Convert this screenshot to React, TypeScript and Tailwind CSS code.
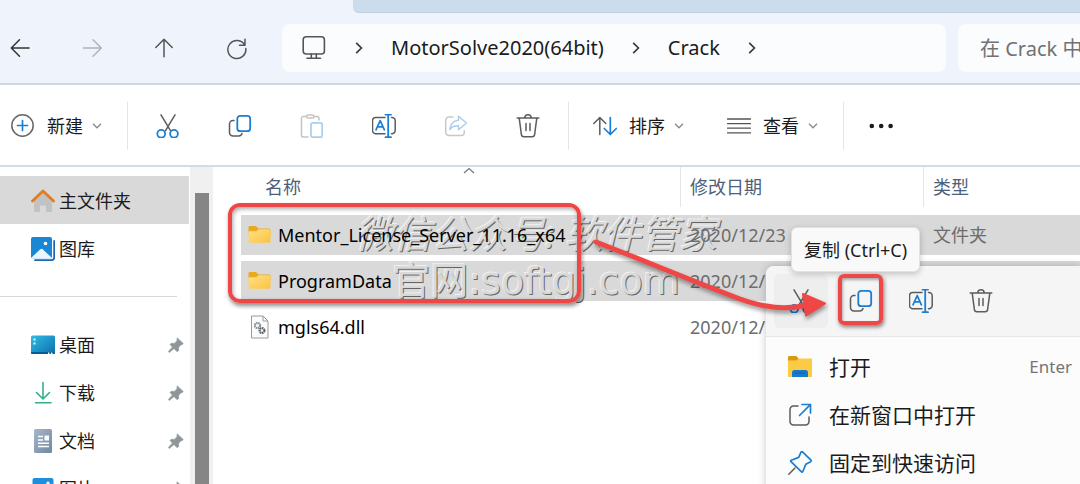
import type { ReactNode } from "react";
import clsx from "clsx";

const BLUE = "#1a7fd4";
const GRAY = "#5c5c5c";

function Icon({
  children,
  size = 24,
  className,
}: {
  children: ReactNode;
  size?: number;
  className?: string;
}) {
  return (
    <svg
      width={size}
      height={size}
      viewBox="0 0 24 24"
      fill="none"
      strokeWidth="1.5"
      strokeLinecap="round"
      strokeLinejoin="round"
      className={clsx("shrink-0", className)}
      aria-hidden="true"
    >
      {children}
    </svg>
  );
}

function ChevronRight() {
  return (
    <svg width="8" height="14" viewBox="0 0 8 14" fill="none" className="shrink-0" aria-hidden="true">
      <path d="M1.2 1.8 6.4 7l-5.2 5.2" stroke="#3a3a3a" strokeWidth="1.7" />
    </svg>
  );
}

function ChevronDown() {
  return (
    <svg width="10" height="6" viewBox="0 0 10 6" fill="none" className="shrink-0" aria-hidden="true">
      <path d="M1 .8l4 4 4-4" stroke="#8a8a8a" strokeWidth="1.3" />
    </svg>
  );
}

function CutIcon() {
  return (
    <Icon>
      <path d="M5 .8l9.600 16M19 .8 9.400 16.800" stroke={GRAY} />
      <circle cx="5.200" cy="19.800" r="3.900" stroke={BLUE} strokeWidth="1.8" />
      <circle cx="18" cy="19.800" r="3.900" stroke={BLUE} strokeWidth="1.8" />
    </Icon>
  );
}

function CopyIcon() {
  return (
    <Icon>
      <path d="M6 6.500H5a3.500 3.500 0 0 0-3.500 3.500v8.500A3.500 3.500 0 0 0 5 22h5.500a3.500 3.500 0 0 0 3.500-2.500" stroke={GRAY} />
      <rect x="9.300" y="1.800" width="12.900" height="15.400" rx="3" stroke={BLUE} strokeWidth="1.8" />
    </Icon>
  );
}

function PasteIcon() {
  return (
    <Icon>
      <path d="M6.500 2.500H3.300a1.800 1.800 0 0 0-1.800 1.800v17a1.800 1.800 0 0 0 1.800 1.800H8M14 2.500h3.200A1.800 1.800 0 0 1 19 4.300V6" stroke="#c4c4c4" />
      <rect x="6.500" y=".9" width="7.500" height="3.200" rx="1.600" stroke="#c4c4c4" />
      <rect x="11" y="8.800" width="11.200" height="14.400" rx="1.800" stroke="#a9cdec" strokeWidth="1.700" />
    </Icon>
  );
}

function RenameIcon() {
  return (
    <Icon>
      <path d="M13 3.500H3.800A3.300 3.300 0 0 0 .5 6.800v9.600a3.300 3.300 0 0 0 3.300 3.300H13M19.500 3.500a3.300 3.300 0 0 1 3.700 3.300v9.600a3.300 3.300 0 0 1-3.700 3.300" stroke={GRAY} />
      <path d="M4 15.800 8.200 6.600l4.200 9.200M5.400 12.800H11" stroke={BLUE} strokeWidth="1.700" />
      <path d="M13.500.5h5.500M13.500 23.200h5.500M16.200.5v22.700" stroke={BLUE} strokeWidth="1.800" />
    </Icon>
  );
}

function ShareIcon() {
  return (
    <Icon>
      <path d="M9 3H5a3.300 3.300 0 0 0-3.300 3.300v11.900A3.300 3.300 0 0 0 5 21.500h12a3.300 3.300 0 0 0 3.300-3.300v-1.500" stroke="#c8c8c8" />
      <path d="M14.500 2.200 22.400 9l-7.900 6.800v-4c-4-.2-6.700 1-8.700 3.700.6-5.400 3.500-8.700 8.700-9.300z" stroke="#abcdeb" />
    </Icon>
  );
}

function TrashIcon() {
  return (
    <Icon>
      <path d="M1.200 4h21.600M8.800 4a3.200 3.200 0 0 1 6.400 0M3.200 4.200l2.200 16.500a2.400 2.400 0 0 0 2.400 2.100h8.400a2.400 2.400 0 0 0 2.400-2.100l2.200-16.500M10 9.600v7M14 9.600v7" stroke={GRAY} />
    </Icon>
  );
}

function FolderIcon() {
  return (
    <svg width="23" height="20" viewBox="0 0 23 20" className="shrink-0" aria-hidden="true">
      <defs>
        <linearGradient id="folder" x1="0" y1="0" x2="1" y2="1">
          <stop offset="0" stopColor="#ffe08a" />
          <stop offset="1" stopColor="#fbc33c" />
        </linearGradient>
      </defs>
      <path d="M.5 2.500C.5 1.400 1.200 1 2 1h6l2.500 2.500H21c1 0 1.500.6 1.500 1.500v5H.5z" fill="#eba91f" />
      <path d="M.5 7.500c0-.8.500-1.200 1.200-1.200h6.500l2.300-2h10.700c.8 0 1.300.5 1.300 1.200v11c0 .9-.5 1.300-1.300 1.300H1.800c-.8 0-1.300-.4-1.300-1.300z" fill="url(#folder)" />
    </svg>
  );
}

function DllIcon() {
  return (
    <svg width="23" height="24" viewBox="0 0 23 24" fill="none" className="shrink-0" aria-hidden="true">
      <path d="M3.500 1h11.500l5 5v17h-16.500z" fill="#fbfbfb" stroke="#9a9a9a" />
      <path d="M15 1v5h5" stroke="#9a9a9a" />
      <circle cx="9.500" cy="10.500" r="2.600" stroke="#8b939b" strokeWidth="2.200" strokeDasharray="1.600 .5" />
      <circle cx="14" cy="15.500" r="2.400" stroke="#59616a" strokeWidth="2.200" strokeDasharray="1.500 .5" />
    </svg>
  );
}

function HomeIcon() {
  return (
    <Icon>
      <path d="M3 11 12 3l9 8v10.500a1.500 1.500 0 0 1-1.500 1.500H15v-6.500h-6V23H4.500A1.500 1.500 0 0 1 3 21.500z" fill="#c2c2c2" />
      <path d="M1.500 12 12 2l10.500 10" stroke="#e07d24" strokeWidth="2.800" />
    </Icon>
  );
}

function GalleryIcon() {
  return (
    <Icon>
      <path d="M4 23.200h16.500a2.700 2.700 0 0 0 2.700-2.700V4" stroke="#1c65b0" strokeWidth="1.800" />
      <rect x="0" y="0" width="21" height="21.500" rx="2" fill="#1b86d3" />
      <path d="M.5 20.500 9 12.500q1.500-1.400 3 0l8.500 8-1 1.200H1.500z" fill="#eaf5fd" />
      <circle cx="14.500" cy="6.500" r="1.800" fill="#fff" />
    </Icon>
  );
}

function DesktopIcon() {
  return (
    <Icon>
      <defs>
        <linearGradient id="desktop" x1="0" y1="0" x2="1" y2="1">
          <stop offset="0" stopColor="#30bce4" />
          <stop offset="1" stopColor="#0b6fae" />
        </linearGradient>
      </defs>
      <rect x="0" y="2.500" width="24" height="18.500" rx="1.500" fill="url(#desktop)" />
      <path d="M0 19h24v.8a1.200 1.200 0 0 1-1.200 1.200H1.200A1.200 1.200 0 0 1 0 19.800z" fill="#075d93" />
      <path d="M2.500 5.500h2v2h-2zM2.500 9.500h2v2h-2zM17 19.500h1.500V21H17zM20 19.500h1.500V21H20z" fill="#e5f8ff" />
    </Icon>
  );
}

function DownloadIcon() {
  return (
    <Icon>
      <path d="M12 1.500v16M5.500 11.500l6.500 6.500 6.500-6.500M4.500 21.800h15.500" stroke="#35b08c" strokeWidth="1.600" />
    </Icon>
  );
}

function DocumentIcon() {
  return (
    <Icon>
      <defs>
        <linearGradient id="doc" x1="0" y1="0" x2="1" y2="1">
          <stop offset="0" stopColor="#a5b7cb" />
          <stop offset="1" stopColor="#73879f" />
        </linearGradient>
      </defs>
      <rect x="3" y="0" width="18" height="24" rx="1.500" fill="url(#doc)" />
      <path d="M7 7.500h5M7 11h5M7 14.300h11M7 17.600h11" stroke="#fff" strokeLinecap="butt" />
      <rect x="13.500" y="6.500" width="4.500" height="5" fill="#fff" />
    </Icon>
  );
}

function PicturesIcon() {
  return (
    <Icon>
      <rect x="1.500" y="1" width="21" height="21" rx="2" fill="#1d8fdc" />
      <path d="M2 20.500 10 12q2-1.600 4 0l8 8.500z" fill="#eaf5fd" />
      <circle cx="17" cy="6" r="1.600" fill="#fff" />
    </Icon>
  );
}

function PinIcon() {
  return (
    <svg width="16" height="16" viewBox="0 0 16 16" className="shrink-0" aria-hidden="true">
      <path d="M9 .8 15.300 6.500l-1.400 1.300-1.400.2-2 2.800.3 2.600-1.600 1.400-3.300-3.200L1.500 15.500.4 14.600l4-4.500L2 7.500l1.300-1.300 3 .2L9 3.800z" fill="#8f9698" stroke="#8f9698" strokeWidth=".6" strokeLinejoin="round" />
    </svg>
  );
}

const quickAccess = [
  { name: "桌面", icon: <DesktopIcon /> },
  { name: "下载", icon: <DownloadIcon /> },
  { name: "文档", icon: <DocumentIcon /> },
  { name: "图片", icon: <PicturesIcon /> },
];

const files = [
  { name: "Mentor_License_Server_11.16_x64", date: "2020/12/23", type: "文件夹", icon: <FolderIcon />, selected: true },
  { name: "ProgramData", date: "2020/12/23", type: "文件夹", icon: <FolderIcon />, selected: true },
  { name: "mgls64.dll", date: "2020/12/23", type: "", icon: <DllIcon />, selected: false },
];

const toolbar = [
  { label: "剪切", icon: <CutIcon /> },
  { label: "复制", icon: <CopyIcon /> },
  { label: "粘贴", icon: <PasteIcon />, disabled: true },
  { label: "重命名", icon: <RenameIcon /> },
  { label: "共享", icon: <ShareIcon />, disabled: true },
  { label: "删除", icon: <TrashIcon /> },
];

export default function App() {
  return (
    <div className="flex h-screen flex-col overflow-hidden bg-white font-['Noto_Sans','Noto_Sans_CJK_SC',sans-serif] text-[18px] leading-6 text-[#1b1b1b]">
      <div className="flex h-[13px] shrink-0 justify-end bg-[#eff4fc]">
        <div className="ml-[353px] flex-1 rounded-bl-md border-b border-[#c0d0dd] bg-[#cbdcec]" />
      </div>
      <NavBar />
      <Toolbar />
      <div className="relative flex min-h-0 flex-1 overflow-hidden">
        <Sidebar />
        <FileList />
        <Watermark />
        <ContextMenu />
        <Annotations />
      </div>
    </div>
  );
}

function NavBar() {
  return (
    <header className="flex shrink-0 items-center border-b-2 border-[#cbd8e1] bg-[#eff4fc] pt-[11px] pb-[11px]">
      <nav className="mr-[34px] flex shrink-0 items-center gap-12 pl-2">
        <button aria-label="后退">
          <Icon>
            <path d="M21 12H3.500M11.500 3.800 3.300 12l8.200 8.200" stroke="#333" />
          </Icon>
        </button>
        <button aria-label="前进" disabled>
          <Icon>
            <path d="M3.500 12H21M13 3.800l8.200 8.200-8.200 8.200" stroke="#b0b3b8" />
          </Icon>
        </button>
        <button aria-label="向上">
          <Icon>
            <path d="M12 20.800V3.500M3.800 11.500 12 3.300l8.200 8.200" stroke="#555" />
          </Icon>
        </button>
        <button aria-label="刷新">
          <Icon>
            <path d="M20.800 9.300A9 9 0 1 0 21.800 12.500M21 3.200v6h-5.500" stroke="#555" />
          </Icon>
        </button>
      </nav>
      <div className="flex h-12 min-w-0 flex-1 items-center rounded-lg bg-[#fafcfe] pl-5 text-[20px]">
        <Icon>
          <rect x="1.200" y=".8" width="21.200" height="17.200" rx="3" stroke="#555" strokeWidth="1.600" />
          <path d="M9.300 18v3.500M14.300 18v3.500M5 22.200h13.500" stroke="#555" strokeWidth="1.600" />
        </Icon>
        <span className="mr-7 ml-[29px]">
          <ChevronRight />
        </span>
        <a href="#motorsolve">MotorSolve2020(64bit)</a>
        <span className="mx-7">
          <ChevronRight />
        </span>
        <a href="#crack">Crack</a>
        <span className="ml-7">
          <ChevronRight />
        </span>
      </div>
      <input
        aria-label="搜索"
        placeholder="在 Crack 中搜索"
        className="ml-3 h-12 w-[122px] shrink-0 rounded-l-lg bg-[#fafcfe] pl-[22px] text-[20px] placeholder:text-[#717171]"
      />
    </header>
  );
}

function MenuButton({ icon, label }: { icon: ReactNode; label: string }) {
  return (
    <button className="flex shrink-0 items-center">
      {icon}
      <span className="mr-[9px] ml-3">{label}</span>
      <ChevronDown />
    </button>
  );
}

function Divider() {
  return <div className="h-12 w-px shrink-0 bg-[#e6e6e6]" />;
}

function Toolbar() {
  return (
    <div className="flex h-[82px] shrink-0 items-center border-b-2 border-[#cfdde8] bg-white pt-[2px] pl-[11px]">
      <MenuButton
        label="新建"
        icon={
          <Icon>
            <circle cx="11.500" cy="11.500" r="10.700" stroke="#666" />
            <path d="M11.500 6.500v10M6.500 11.500h10" stroke={BLUE} strokeWidth="1.700" />
          </Icon>
        }
      />
      <div className="ml-[25px] flex items-center">
        <Divider />
        <div className="mx-1 flex">
          {toolbar.map(({ label, icon, disabled }) => (
            <button key={label} aria-label={label} disabled={disabled} className="flex w-[72px] justify-center">
              {icon}
            </button>
          ))}
        </div>
        <Divider />
      </div>
      <div className="mr-[25px] ml-6 flex gap-[43px]">
        <MenuButton
          label="排序"
          icon={
            <Icon>
              <path d="M6.800 20.500V3.500M.8 9.500l6-6 6 6" stroke={GRAY} />
              <path d="M17.300 3.500v17M11.300 14.500l6 6 6-6" stroke={BLUE} strokeWidth="1.700" />
            </Icon>
          }
        />
        <MenuButton
          label="查看"
          icon={
            <Icon>
              <path d="M.5 5h23M.5 9.600h23M.5 14.200h23M.5 18.800h23" stroke="#555" strokeWidth="1.300" />
            </Icon>
          }
        />
      </div>
      <Divider />
      <button aria-label="更多" className="ml-[25px]">
        <Icon>
          <path d="M2.800 12h.01M12.200 12h.01M21.600 12h.01" stroke="#1b1b1b" strokeWidth="4.600" />
        </Icon>
      </button>
    </div>
  );
}

function SidebarItem({
  icon,
  name,
  active,
  pinned,
}: {
  icon: ReactNode;
  name: string;
  active?: boolean;
  pinned?: boolean;
}) {
  return (
    <a
      href={`#${name}`}
      className={clsx("flex h-12 shrink-0 items-center gap-1 pt-px pr-[5px] pl-[31px]", active && "bg-[#d9d9d9]")}
    >
      {icon}
      <span className="flex-1">{name}</span>
      {pinned && <PinIcon />}
    </a>
  );
}

function Sidebar() {
  return (
    <aside className="flex shrink-0 overflow-hidden">
      <div className="flex w-[190px] flex-col pt-[9px] pr-px">
        <SidebarItem icon={<HomeIcon />} name="主文件夹" active />
        <SidebarItem icon={<GalleryIcon />} name="图库" />
        <hr className="mt-6 mr-3 mb-[23px] border-[#d8d8d8]" />
        {quickAccess.map(({ name, icon }) => (
          <SidebarItem key={name} icon={icon} name={name} pinned />
        ))}
      </div>
      <div className="w-[23px] bg-[#f0f0f0] px-[5px] pt-[26px]">
        <div className="h-full w-[14px] bg-[#868686]" />
      </div>
    </aside>
  );
}

function FileList() {
  return (
    <main className="min-w-0 flex-1 pl-7">
      <table className="w-full table-fixed border-separate border-spacing-0 text-left">
        <colgroup>
          <col className="w-[439px]" />
          <col className="w-[243px]" />
          <col />
        </colgroup>
        <thead>
          <tr className="text-[#4c607a]">
            <th className="h-12 p-0 align-top font-normal">
              <div className="relative ml-4 flex h-10 items-center pl-2">
                名称
                <svg width="12" height="7" viewBox="0 0 12 7" fill="none" className="absolute top-0 left-1/2 -translate-x-1/2" aria-hidden="true">
                  <path d="M1 6l5-4.500L11 6" stroke="#777" strokeWidth="1.200" />
                </svg>
              </div>
            </th>
            {["修改日期", "类型"].map((title) => (
              <th key={title} className="h-12 p-0 align-top font-normal">
                <div className="flex h-10 items-center border-l border-[#e5e5e5] pl-[9px]">{title}</div>
              </th>
            ))}
          </tr>
        </thead>
        <tbody>
          {files.map(({ name, date, type, icon, selected }) => (
            <tr
              key={name}
              className={clsx(
                "[&>td]:h-[46px] [&>td]:border-b-[6px] [&>td]:border-white [&>td]:bg-clip-padding [&>td]:p-0",
                selected && "[&>td]:bg-[#d9d9d9]"
              )}
            >
              <td>
                <div className="relative z-10 flex items-center gap-[7px] pl-[7px] text-black">
                  {icon}
                  {name}
                </div>
              </td>
              <td>
                <div className="relative z-10 pl-[10px] text-[#6d6d6d]">{date}</div>
              </td>
              <td>
                <div className="relative z-10 pl-[10px] text-[#6d6d6d]">{type}</div>
              </td>
            </tr>
          ))}
        </tbody>
      </table>
    </main>
  );
}

// sits above the row fill but below the file names
function Watermark() {
  return (
    <div className="pointer-events-none absolute top-[42px] left-[353px] z-[5] w-[366px] text-center font-['DejaVu_Sans','Noto_Sans_CJK_SC',sans-serif] text-[38px] leading-[48px] whitespace-nowrap text-[#d9d9d9] [text-shadow:1px_1px_0_#666,-1px_-1px_0_#f0f0f0]">
      <p className="font-['Noto_Sans','Noto_Sans_CJK_SC',sans-serif] italic">微信公众号: 软件管家</p>
      <p>官网:softgj.com</p>
    </div>
  );
}

function ContextMenu() {
  return (
    <div className="absolute top-[99px] right-0 left-[766px] z-20 rounded-tl-lg bg-[#fcfcfc] shadow-[0_0_8px_rgba(0,0,0,0.22)]">
      <div className="flex gap-[6px] rounded-tl-lg border-b border-[#e6e6e6] bg-[#f5f5f5] px-2 py-2">
        <button aria-label="剪切" className="flex h-[54px] w-[54px] items-center justify-center rounded-md bg-[#eeeeee]">
          <CutIcon />
        </button>
        <button aria-label="复制" aria-describedby="copy-tip" className="flex h-[54px] w-[54px] items-center justify-center">
          <CopyIcon />
        </button>
        <button aria-label="重命名" className="flex h-[54px] w-[54px] items-center justify-center">
          <RenameIcon />
        </button>
        <button aria-label="删除" className="flex h-[54px] w-[54px] items-center justify-center">
          <TrashIcon />
        </button>
      </div>
      <div className="flex flex-col py-[6px] text-[21px]">
        <button className="flex h-12 items-center pr-2 pl-[22px]">
          <svg width="24" height="24" viewBox="0 0 24 24" className="mr-[17px] shrink-0" aria-hidden="true">
            <path d="M0 2.500C0 1.500.6 1 1.500 1h6.800l2.200 2.500V8H0z" fill="#d99a11" />
            <path d="M0 5.500h8.500l2-2H23c.7 0 1 .4 1 1V21c0 .7-.4 1-1 1H1c-.6 0-1-.3-1-1z" fill="#fccb45" />
            <path d="M4 22v-4.500A2.500 2.500 0 0 1 6.500 15h11a2.500 2.500 0 0 1 2.500 2.500V22z" fill="#1778cc" />
            <path d="M7 18h10" stroke="#1266b3" strokeWidth="1.200" />
          </svg>
          <span className="flex-1 text-left">打开</span>
          <span className="text-[17px] text-[#757575]">Enter</span>
        </button>
        <button className="flex h-12 items-center pl-[22px]">
          <Icon className="mr-[17px]">
            <path d="M10 3H5.500A3.500 3.500 0 0 0 2 6.500v12A3.500 3.500 0 0 0 5.500 22h12a3.500 3.500 0 0 0 3.500-3.500V14" stroke={GRAY} />
            <path d="M14 1.500h8.500V10M22.300 1.700 11.500 12.500" stroke={BLUE} strokeWidth="1.700" />
          </Icon>
          在新窗口中打开
        </button>
        <button className="flex h-12 items-center pl-[22px]">
          <Icon className="mr-[17px]">
            <path d="M7 17 .8 23.200" stroke={GRAY} />
            <path d="M14.500.8 23 9.200q.6.900-.4 1.500l-4.800 2.600-3 7.200q-.7 1-1.500.2L3 10.700q-.8-.9.300-1.500l7.400-2.800L13 1.200q.6-1 1.500-.4z" stroke={BLUE} strokeWidth="1.700" />
          </Icon>
          固定到快速访问
        </button>
      </div>
    </div>
  );
}

function Annotations() {
  return (
    <div className="pointer-events-none absolute inset-0 z-30">
      <div
        id="copy-tip"
        role="tooltip"
        className="absolute top-[60px] left-[791px] flex h-[45px] items-center rounded-md border border-[#e2e2e2] bg-[#f9f9f9] px-3 whitespace-nowrap shadow-[0_2px_6px_rgba(0,0,0,0.22)]"
      >
        复制 (Ctrl+C)
      </div>
      <div className="absolute top-[36px] left-[228px] h-[100px] w-[353px] rounded-xl border-4 border-[#ef4646] shadow-[1px_3px_4px_rgba(0,0,0,0.45),inset_1px_2px_4px_rgba(0,0,0,0.35)]" />
      <div className="absolute top-[107px] left-[838px] h-[51px] w-[45px] rounded-md border-4 border-[#ef4646] shadow-[1px_2px_4px_rgba(0,0,0,0.5),inset_1px_2px_3px_rgba(0,0,0,0.3)]" />
      <svg
        width="240"
        height="90"
        viewBox="0 0 240 90"
        fill="none"
        className="absolute top-[67px] left-[590px] drop-shadow-[1px_3px_2px_rgba(0,0,0,0.4)]"
        aria-hidden="true"
      >
        <path d="M6 8C60 29 105 48 150 65 175 74 195 76 218 71" stroke="#ef4646" strokeWidth="5" strokeLinecap="round" />
        <path d="M213 60l22 9.500-19 12z" fill="#ef4646" stroke="#ef4646" strokeWidth="2" strokeLinejoin="round" />
      </svg>
    </div>
  );
}
